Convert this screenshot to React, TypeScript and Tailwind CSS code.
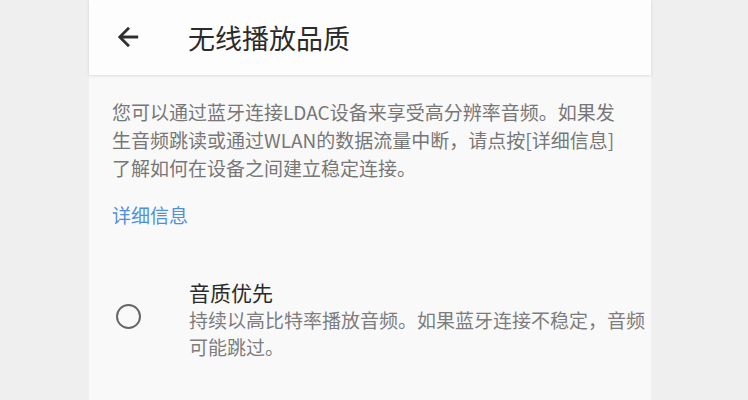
const FONT = "font-['Noto_Sans_CJK_SC','Noto_Sans',sans-serif]";

function BackArrow() {
  return (
    <svg width="30" height="30" viewBox="0 0 24 24" className="text-[#2e2e2e]">
      <path fill="currentColor" stroke="currentColor" strokeWidth="0.3" d="M20 11H7.83l5.59-5.59L12 4l-8 8 8 8 1.41-1.41L7.83 13H20v-2z" />
    </svg>
  );
}

export default function App() {
  const intro = [
    '您可以通过蓝牙连接LDAC设备来享受高分辨率音频。如果发',
    '生音频跳读或通过WLAN的数据流量中断，请点按[详细信息]',
    '了解如何在设备之间建立稳定连接。',
  ];

  return (
    <div className={`w-[748px] h-[400px] bg-[#efefef] overflow-hidden flex ${FONT}`}>
      <div className="ml-[89px] w-[562px] h-full bg-[#f9f9f9] flex flex-col">
        <header className="relative z-10 h-[75px] shrink-0 bg-[#fdfdfd] flex items-center shadow-[0_1px_3px_rgba(0,0,0,0.12)]">
          <div className="w-[99px] pl-[24px] pb-[2px] flex items-center">
            <BackArrow />
          </div>
          <h1 className="text-[27px] leading-none text-[#2b2b2b]">无线播放品质</h1>
        </header>

        <div className="pl-[23px] pt-[23px]">
          <p className="text-[19px] leading-[28px] text-[#777777]">
            {intro.map((line) => (
              <span key={line} className="block whitespace-nowrap">{line}</span>
            ))}
          </p>
          <div className="mt-[19px] text-[19px] leading-[28px] text-[#4d8fe0]">详细信息</div>
        </div>

        <div className="flex items-start mt-[49px]">
          <div className="ml-[27px] mr-[48px] mt-[26px] w-[25px] h-[25px] rounded-full border-[2.5px] border-[#666666] shrink-0" />
          <div>
            <div className="text-[21px] leading-[28px] text-[#2b2b2b]">音质优先</div>
            <div className="text-[19px] leading-[27px] text-[#7d7d7d]">
              <span className="block whitespace-nowrap">持续以高比特率播放音频。如果蓝牙连接不稳定，音频</span>
              <span className="block whitespace-nowrap">可能跳过。</span>
            </div>
          </div>
        </div>
      </div>
    </div>
  );
}
